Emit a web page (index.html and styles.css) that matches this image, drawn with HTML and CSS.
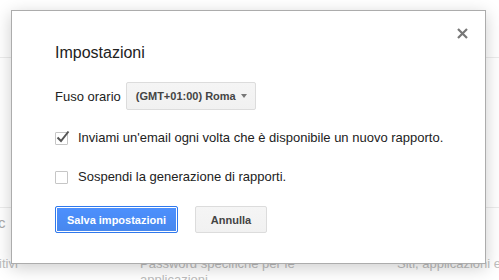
FILE: index.html
```html
<!DOCTYPE html>
<html lang="it">
<head>
  <meta charset="UTF-8" />
  <meta name="viewport" content="width=device-width, initial-scale=1.0"/>
  <title>Impostazioni</title>
  <link rel="stylesheet" href="styles.css">
</head>
<body>

  <div class="page">
    <div class="topbar"></div>
    <div class="section">
      <div class="section-title">Accesso e statistic</div>
      <div class="section-row">
        <div>Autorizzazioni dispositivi</div>
        <div>Password specifiche per le<br>applicazioni</div>
        <div>Siti, applicazioni e servizi</div>
      </div>
    </div>
  </div>

  <div class="dialog">
    <button class="dialog-close" title="Chiudi">
      <svg width="11" height="11" viewBox="0 0 11 11">
        <path d="M1 1 L10 10 M10 1 L1 10" stroke="#777" stroke-width="2.2" fill="none"/>
      </svg>
    </button>

    <h2 class="dialog-title">Impostazioni</h2>

    <div class="field">
      <span class="field-label">Fuso orario</span>
      <div class="menu-button">
        <span>(GMT+01:00) Roma</span>
        <span class="menu-arrow"></span>
      </div>
    </div>

    <label class="check-row">
      <span class="checkbox checked">
        <svg class="checkmark" width="15" height="15" viewBox="0 0 15 15">
          <path d="M2.5 7.5 L6 11 L13.5 1.5" stroke="#555" stroke-width="2" fill="none"/>
        </svg>
      </span>
      Inviami un'email ogni volta che è disponibile un nuovo rapporto.
    </label>

    <label class="check-row second">
      <span class="checkbox"></span>
      Sospendi la generazione di rapporti.
    </label>

    <div class="buttons">
      <button class="btn btn-primary">Salva impostazioni</button>
      <button class="btn">Annulla</button>
    </div>
  </div>

</body>
</html>
```

FILE: styles.css
```css
body {
  margin: 0;
  background: #fff;
  font-family: 'Liberation Sans', Arial, sans-serif;
  overflow: hidden;
}

.page {
  height: 280px;
  overflow: hidden;
}

.topbar {
  height: 57px;
  border-bottom: 1px solid #ececec;
}

.section {
  margin-top: 149px;
  border-top: 1px solid #ececec;
}

.section-title {
  margin: 6px 0 0 -118px;
  font-size: 15px;
  line-height: 18px;
  color: #a8a8a8;
  white-space: nowrap;
}

.section-row {
  display: grid;
  grid-template-columns: 263px 257px 1fr;
  margin: 24px 0 0 -123px;
  font-size: 13px;
  line-height: 16px;
  color: #bdbdbd;
  white-space: nowrap;
}

.dialog {
  position: absolute;
  left: 11px;
  top: 10px;
  width: 475px;
  box-sizing: border-box;
  padding: 32px 12px 30px 43px;
  background: #fff;
  border: 1px solid #acacac;
  box-shadow: 0 4px 16px rgba(0, 0, 0, 0.2);
  color: #222;
  font-size: 13px;
}

.dialog-close {
  position: absolute;
  top: 17px;
  right: 17px;
  width: 11px;
  height: 11px;
  padding: 0;
  border: none;
  background: none;
  cursor: pointer;
}

.dialog-close svg {
  display: block;
}

.dialog-title {
  margin: 0 0 19px;
  font-size: 16px;
  line-height: 20px;
  font-weight: normal;
  color: #222;
}

.field {
  display: flex;
  align-items: center;
  height: 28px;
  margin-bottom: 20px;
}

.field-label {
  margin-right: 5px;
}

.menu-button {
  display: flex;
  align-items: center;
  height: 28px;
  box-sizing: border-box;
  padding: 0 8px 0 9px;
  border: 1px solid #dcdcdc;
  border-radius: 2px;
  background: linear-gradient(to bottom, #f5f5f5, #f1f1f1);
  color: #444;
  font-size: 11px;
  font-weight: bold;
  cursor: default;
}

.menu-arrow {
  margin-left: 5px;
  border-top: 4px solid #777;
  border-left: 3.5px solid transparent;
  border-right: 3.5px solid transparent;
}

.check-row {
  display: flex;
  align-items: center;
  line-height: 16px;
  margin-bottom: 23px;
  white-space: nowrap;
}

.check-row.second {
  margin-bottom: 21px;
}

.checkbox {
  position: relative;
  flex: none;
  width: 13px;
  height: 13px;
  box-sizing: border-box;
  margin-right: 10px;
  border: 1px solid #c6c6c6;
  border-radius: 1px;
  background: #fff;
}

.checkmark {
  position: absolute;
  left: -1px;
  top: -3px;
}

.buttons {
  display: flex;
  gap: 17px;
}

.btn {
  height: 27px;
  min-width: 72px;
  box-sizing: border-box;
  padding: 0 11px;
  border: 1px solid #dcdcdc;
  border-radius: 2px;
  background: linear-gradient(to bottom, #f5f5f5, #f1f1f1);
  color: #444;
  font-family: 'Liberation Sans', Arial, sans-serif;
  font-size: 11px;
  font-weight: bold;
  cursor: pointer;
}

.btn-primary {
  border-color: #3079ed;
  background: linear-gradient(to bottom, #4d90fe, #4787ed);
  color: #fff;
  box-shadow: inset 0 0 0 1px #fff;
}
```
